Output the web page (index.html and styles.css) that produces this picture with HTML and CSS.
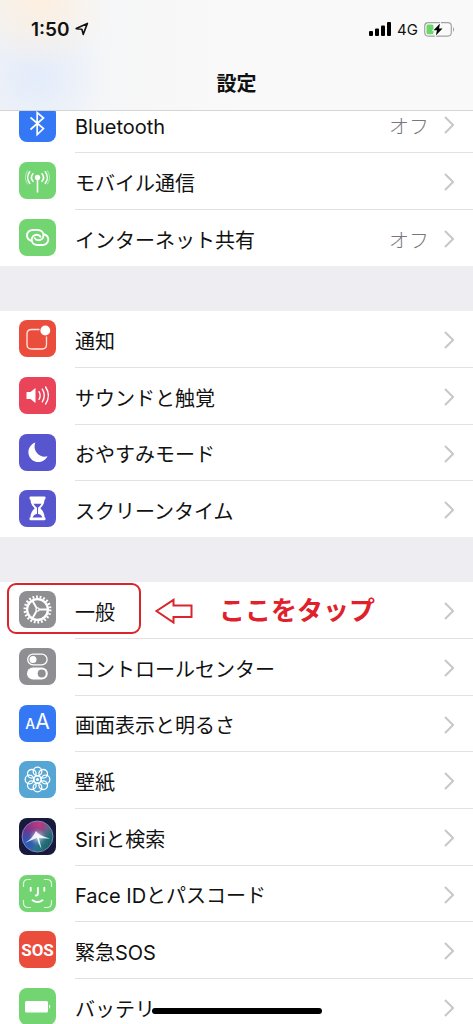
FILE: index.html
```html
<!DOCTYPE html>
<html lang="ja">
<head>
<meta charset="utf-8">
<meta name="viewport" content="width=device-width, initial-scale=1">
<title>設定</title>
<link rel="stylesheet" href="styles.css">
</head>
<body>
<div class="screen">
  <header class="header">
    <div class="status">
      <span class="time">1:50</span>
      <svg class="location" viewBox="0 0 14 14" width="14" height="14"><path d="M1.2 6.600L12.400 1.400L8.200 12.400L6.900 7.200Z" fill="none" stroke="#111" stroke-width="1.6" stroke-linejoin="round"/></svg>
      <span class="spacer"></span>
      <svg viewBox="0 0 23 14" width="23" height="14"><g fill="#000"><rect x="0" y="9" width="4" height="5" rx="1"/><rect x="6" y="6.500" width="4" height="7.500" rx="1"/><rect x="12" y="3.500" width="4" height="10.500" rx="1"/><rect x="18" y="0" width="4" height="14" rx="1"/></g></svg>
      <span class="network">4G</span>
      <svg viewBox="0 0 31 15" width="31" height="15"><rect x="0.700" y="0.700" width="26.600" height="13.400" rx="3.500" fill="#fafafa" stroke="#a3a3a3" stroke-width="1.200"/><rect x="2.500" y="2.500" width="7" height="9.800" rx="1.500" fill="#6bd66c"/><path d="M29 5q2 2.500 0 5z" fill="#999"/><path d="M16 1.500L9.500 8.300H13L11.800 13.500L18.500 6.500H15Z" fill="#000" stroke="#fafafa" stroke-width="1.500" paint-order="stroke"/></svg>
    </div>
    <h1 class="title">設定</h1>
  </header>

  <main class="settings">
    <nav class="group">
      <a class="row" href="#bluetooth">
        <svg class="icon blue" viewBox="0 0 37 37"><path d="M11.500 12.500L24.500 23.500L18.200 29.500V7.500L24.500 13L11.500 24.500" fill="none" stroke="#fff" stroke-width="1.700"/></svg>
        <span class="cell"><span class="label">Bluetooth</span><span class="value">オフ</span><svg class="chevron" viewBox="0 0 10 18"><path d="M1 1L9 9L1 17"/></svg></span>
      </a>
      <a class="row" href="#mobile">
        <svg class="icon green" viewBox="0 0 37 37"><g fill="none" stroke="#fff" stroke-width="1.600" stroke-linecap="round"><path d="M18.500 16V30M14 11.800a5.800 5.800 0 0 0 0 7.500M23 11.800a5.800 5.800 0 0 1 0 7.500M10.700 9.800a9.500 9.500 0 0 0 0 11.500M26.300 9.800a9.500 9.500 0 0 1 0 11.500"/><path d="M8.500 8.800a11 11 0 0 0 0 13.200M28.500 8.800a11 11 0 0 1 0 13.200" stroke-width="1" opacity=".5"/></g><circle cx="18.500" cy="15.500" r="2.700" fill="#fff"/></svg>
        <span class="cell"><span class="label">モバイル通信</span><svg class="chevron" viewBox="0 0 10 18"><path d="M1 1L9 9L1 17"/></svg></span>
      </a>
      <a class="row" href="#tethering">
        <svg class="icon green" viewBox="0 0 37 37"><g fill="none" stroke="#fff" stroke-width="1.900" stroke-linecap="round"><path d="M12.800 21.800C9.500 21 8 18.700 8 16.400C8 13.300 10.500 11 13.700 11H18.500C22 11 24.500 13.300 24.500 16.300C24.500 19.300 22.200 21.300 19.500 21.300C17.500 21.300 16.400 20.500 15.800 19.200"/><path d="M24.500 15.300C27.700 16 29.300 18.300 29.300 20.500C29.300 23.600 26.800 26 23.600 26H18.500C15.200 26 12.700 23.700 12.700 20.700C12.700 17.700 15 15.700 17.600 15.700C19.600 15.700 20.800 16.500 21.400 17.800"/></g></svg>
        <span class="cell"><span class="label">インターネット共有</span><span class="value">オフ</span><svg class="chevron" viewBox="0 0 10 18"><path d="M1 1L9 9L1 17"/></svg></span>
      </a>
    </nav>

    <nav class="group">
      <a class="row" href="#notifications">
        <svg class="icon red" viewBox="0 0 37 37"><path d="M20.500 9.500H12.500Q8 9.500 8 14V24.500Q8 29 12.500 29H23Q27.500 29 27.500 24.500V16.500" fill="none" stroke="#ffe5df" stroke-width="1.300"/><circle cx="26.300" cy="10.500" r="4.900" fill="#fff"/></svg>
        <span class="cell"><span class="label">通知</span><svg class="chevron" viewBox="0 0 10 18"><path d="M1 1L9 9L1 17"/></svg></span>
      </a>
      <a class="row" href="#sounds">
        <svg class="icon pink" viewBox="0 0 37 37"><path d="M7.500 15.500Q7.500 15 8 15H11.500L16.500 11V26L11.500 22H8Q7.500 22 7.500 21.500Z" fill="#fff"/><g fill="none" stroke="#fff" stroke-width="1.400" stroke-linecap="round"><path d="M20 14.700Q22.400 18.500 20 22.300M23.300 12.200Q27.400 18.500 23.300 24.800M26.600 10Q32.200 18.500 26.600 27"/></g></svg>
        <span class="cell"><span class="label">サウンドと触覚</span><svg class="chevron" viewBox="0 0 10 18"><path d="M1 1L9 9L1 17"/></svg></span>
      </a>
      <a class="row" href="#dnd">
        <svg class="icon purple" viewBox="0 0 37 37"><path d="M16.300 8.600A10 10 0 1 0 28.500 22.200A10.200 10.200 0 0 1 16.300 8.600Z" fill="#fff"/></svg>
        <span class="cell"><span class="label">おやすみモード</span><svg class="chevron" viewBox="0 0 10 18"><path d="M1 1L9 9L1 17"/></svg></span>
      </a>
      <a class="row" href="#screentime">
        <svg class="icon purple" viewBox="0 0 37 37"><path d="M11.500 6.500H25.500Q26.500 6.500 26.500 7.500V8.500Q26.500 9.600 25.500 9.700Q25.500 14.500 21.300 18.300Q25.500 22 25.500 27.200Q26.500 27.300 26.500 28.400V29.300Q26.500 30.300 25.500 30.300H11.500Q10.500 30.300 10.500 29.300V28.400Q10.500 27.300 11.500 27.200Q11.500 22 15.700 18.300Q11.500 14.500 11.500 9.700Q10.500 9.600 10.500 8.500V7.500Q10.500 6.500 11.500 6.500Z" fill="#fff"/><path d="M14.500 13.800H22.500Q21.500 16 18.500 18.300Q15.500 16 14.500 13.800ZM13.500 27.500Q14.500 24.500 18 23.800V18H19V23.800Q22.500 24.500 23.500 27.500Z" fill="#5856ce"/></svg>
        <span class="cell"><span class="label">スクリーンタイム</span><svg class="chevron" viewBox="0 0 10 18"><path d="M1 1L9 9L1 17"/></svg></span>
      </a>
    </nav>

    <nav class="group">
      <a class="row" href="#general">
        <svg class="icon gray" viewBox="0 0 37 37"><g fill="none" stroke="#fff"><circle cx="18.500" cy="18.500" r="12.700" stroke-width="2.600" stroke-dasharray="1.800 1.827"/><circle cx="18.500" cy="18.500" r="10.400" stroke-width="2.300"/><circle cx="18.500" cy="18.500" r="1.600" stroke-width="1.300"/><path d="M20 18.500H28.500M17.600 17L13.300 9.500M17.600 20L13.300 27.500" stroke-width="1.900"/></g></svg>
        <span class="cell"><span class="label">一般</span><svg class="chevron" viewBox="0 0 10 18"><path d="M1 1L9 9L1 17"/></svg></span>
        <span class="marker"></span>
        <span class="hint"><svg viewBox="0 0 38 26" width="38" height="26"><path d="M1.500 13L18.500 1.800V7.500H36.500V19H18.500V24.500Z" fill="#fff" stroke="#d9262c" stroke-width="2"/></svg><span class="hint-text">ここをタップ</span></span>
      </a>
      <a class="row" href="#control">
        <svg class="icon gray" viewBox="0 0 37 37"><rect x="8.700" y="6.200" width="19.400" height="10.600" rx="5.300" fill="none" stroke="#fff" stroke-width="1.300"/><circle cx="14" cy="11.500" r="3.500" fill="#fff"/><rect x="8" y="19.500" width="20.800" height="12" rx="6" fill="#fff"/><circle cx="22.700" cy="25.500" r="4" fill="#8e8e93"/></svg>
        <span class="cell"><span class="label">コントロールセンター</span><svg class="chevron" viewBox="0 0 10 18"><path d="M1 1L9 9L1 17"/></svg></span>
      </a>
      <a class="row" href="#display">
        <span class="icon blue letters"><span class="small-a">A</span><span class="large-a">A</span></span>
        <span class="cell"><span class="label">画面表示と明るさ</span><svg class="chevron" viewBox="0 0 10 18"><path d="M1 1L9 9L1 17"/></svg></span>
      </a>
      <a class="row" href="#wallpaper">
        <svg class="icon sky" viewBox="0 0 37 37"><g fill="none" stroke="#fff" stroke-width="1.300"><circle cx="18.500" cy="10.500" r="4.300"/><circle cx="24.200" cy="12.800" r="4.300"/><circle cx="26.500" cy="18.500" r="4.300"/><circle cx="24.200" cy="24.200" r="4.300"/><circle cx="18.500" cy="26.500" r="4.300"/><circle cx="12.800" cy="24.200" r="4.300"/><circle cx="10.500" cy="18.500" r="4.300"/><circle cx="12.800" cy="12.800" r="4.300"/><circle cx="18.500" cy="18.500" r="3.600"/></g><circle cx="18.500" cy="18.500" r="1.500" fill="#fff"/></svg>
        <span class="cell"><span class="label">壁紙</span><svg class="chevron" viewBox="0 0 10 18"><path d="M1 1L9 9L1 17"/></svg></span>
      </a>
      <a class="row" href="#siri">
        <svg class="icon navy" viewBox="0 0 37 37"><defs><radialGradient id="orb" cx=".5" cy=".5" r=".5"><stop offset="0" stop-color="#fff" stop-opacity=".8"/><stop offset=".4" stop-color="#b9c8ee" stop-opacity=".45"/><stop offset="1" stop-color="#345" stop-opacity="0"/></radialGradient><linearGradient id="hue" x1="0" y1="0.200" x2="1" y2=".8"><stop offset="0" stop-color="#7a2a8c"/><stop offset=".35" stop-color="#5f3a94"/><stop offset=".6" stop-color="#2b7c8c"/><stop offset="1" stop-color="#145c62"/></linearGradient><radialGradient id="rose" cx=".55" cy=".1" r=".5"><stop offset="0" stop-color="#c4387f"/><stop offset="1" stop-color="#c4387f" stop-opacity="0"/></radialGradient><radialGradient id="azure" cx=".1" cy=".75" r=".5"><stop offset="0" stop-color="#2060c4"/><stop offset="1" stop-color="#2060c4" stop-opacity="0"/></radialGradient></defs><circle cx="18.500" cy="18.500" r="15.300" fill="url(#hue)"/><circle cx="18.500" cy="18.500" r="15.300" fill="url(#rose)"/><circle cx="18.500" cy="18.500" r="15.300" fill="url(#azure)"/><circle cx="18.500" cy="19" r="11" fill="url(#orb)"/><path d="M6 25Q14 20 17 13Q20 18 31 20.500Q23 20.300 20 20L22.500 31Q18.800 25 18 19.800Q14 21.500 6 25Z" fill="#fff" opacity=".9"/><circle cx="18.500" cy="18.500" r="15.500" fill="none" stroke="#9c9bc4" stroke-width=".8"/></svg>
        <span class="cell"><span class="label">Siriと検索</span><svg class="chevron" viewBox="0 0 10 18"><path d="M1 1L9 9L1 17"/></svg></span>
      </a>
      <a class="row" href="#faceid">
        <svg class="icon green" viewBox="0 0 37 37"><g fill="none" stroke="#fff" stroke-linecap="round"><path d="M4.500 11.500V9Q4.500 4.500 9 4.500H11.500M25.500 4.500H28Q32.500 4.500 32.500 9V11.500M32.500 25.500V28Q32.500 32.500 28 32.500H25.500M11.500 32.500H9Q4.500 32.500 4.500 28V25.500" stroke-width="1.200" opacity=".8"/><path d="M11.700 12.800V15.800M25.300 12.800V15.800M18.900 13V18.500Q18.900 20.500 16.800 20.500M13.500 25.300Q18.500 28.800 23.500 25.300" stroke-width="1.900"/></g></svg>
        <span class="cell"><span class="label">Face IDとパスコード</span><svg class="chevron" viewBox="0 0 10 18"><path d="M1 1L9 9L1 17"/></svg></span>
      </a>
      <a class="row" href="#sos">
        <span class="icon red sos">SOS</span>
        <span class="cell"><span class="label">緊急SOS</span><svg class="chevron" viewBox="0 0 10 18"><path d="M1 1L9 9L1 17"/></svg></span>
      </a>
      <a class="row" href="#battery">
        <svg class="icon green" viewBox="0 0 37 37"><rect x="6" y="13" width="23" height="11.500" rx="1.500" fill="#fff"/><path d="M30 16.500q2.500 2.200 0 4.500z" fill="#fff"/></svg>
        <span class="cell"><span class="label">バッテリー</span><svg class="chevron" viewBox="0 0 10 18"><path d="M1 1L9 9L1 17"/></svg></span>
      </a>
    </nav>
  </main>
  <div class="home-indicator"></div>
</div>
</body>
</html>
```
FILE: styles.css
```css
* { box-sizing: border-box; }

body {
  margin: 0;
  font-family: Inter, "Noto Sans CJK JP", sans-serif;
  color: #111;
}

.screen {
  position: relative;
  height: 100vh;
  overflow: hidden;
  background: #ededf2;
}

.header {
  position: relative;
  z-index: 1;
  height: 111px;
  border-bottom: 1px solid #d5d5d8;
  background:
    radial-gradient(circle at 40px 0, #fcefdf 0, rgba(252, 239, 223, 0) 70px),
    radial-gradient(circle at 36px 76px, #e3ecfb 0, rgba(227, 236, 251, 0) 75px),
    linear-gradient(90deg, #f3f4f6, #f9f9f9 50%);
}

.status {
  display: flex;
  align-items: center;
  height: 58px;
  padding: 0 18px 0 31px;
}

.time { font-size: 19px; font-weight: 600; }
.location { margin-left: 5px; }
.spacer { flex: 1; }
.network { margin: 0 6px 0 5px; font-size: 15px; }

.title {
  margin: 0;
  font-size: 20px;
  line-height: 52px;
  font-weight: 700;
  text-align: center;
}

.settings {
  display: flex;
  flex-direction: column;
  gap: 45px;
  margin-top: -15px;
}

.group { background: #fff; }

.row {
  position: relative;
  display: flex;
  height: 57px;
  padding-left: 19px;
  color: inherit;
  text-decoration: none;
}

.row:nth-child(3n), .row:last-child { height: 56px; }

.icon {
  flex: none;
  width: 37px;
  height: 37px;
  margin: 9px 19px 0 0;
  border-radius: 8px;
}

.blue { background: #3478f6; }
.green { background: #72d572; }
.red { background: #eb4d3d; }
.pink { background: #ea445a; }
.purple { background: #5856ce; }
.gray { background: #8e8e93; }
.sky { background: #55a5d5; }
.navy { background: #171a3c; }

.cell {
  flex: 1;
  display: flex;
  align-items: center;
  padding: 2px 19px 0 0;
  border-bottom: 1px solid #e2e2e4;
}

.row:last-child .cell { border-bottom: 0; }

.label {
  flex: 1;
  padding-top: 3px;
  font-size: 20px;
  line-height: 28px;
}

.value {
  margin-right: 15px;
  padding-top: 3px;
  font-size: 20px;
  line-height: 28px;
  font-weight: 300;
  color: #77777c;
}

.chevron {
  width: 10px;
  height: 18px;
  fill: none;
  stroke: #c7c7cc;
  stroke-width: 2;
}

.letters {
  display: flex;
  align-items: baseline;
  justify-content: center;
  color: #fff;
  line-height: 34px;
}

.small-a { font-size: 14px; font-weight: 500; }
.large-a { font-size: 21px; }

.sos {
  color: #fff;
  font-family: Roboto, sans-serif;
  font-size: 17px;
  font-weight: 700;
  line-height: 38px;
  text-align: center;
}

.marker {
  position: absolute;
  top: 1px;
  left: 7px;
  width: 134px;
  height: 51px;
  border: 2px solid #d9262c;
  border-radius: 9px;
}

.hint {
  position: absolute;
  top: 11px;
  left: 155px;
  display: flex;
  align-items: center;
  gap: 26px;
  height: 36px;
}

.hint-text {
  color: #e0202a;
  font-size: 26px;
  font-weight: 700;
  line-height: 36px;
}

.home-indicator {
  position: absolute;
  z-index: 2;
  bottom: 10px;
  left: 50%;
  width: 170px;
  height: 6px;
  margin-left: -85px;
  border-radius: 3px;
  background: #000;
}
```
